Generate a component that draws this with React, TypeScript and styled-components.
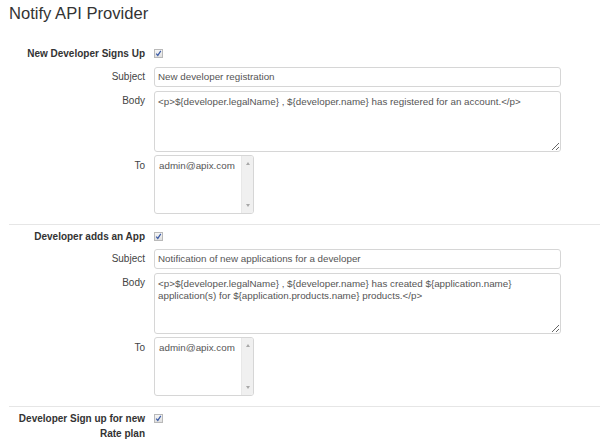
import React from "react";
import styled, { createGlobalStyle } from "styled-components";

const Global = createGlobalStyle`
  html, body { margin: 0; padding: 0; background: #fff; }
  body { font-family: "Liberation Sans", Arial, sans-serif; font-size: 10px; color: #333; }
  * { box-sizing: border-box; }
`;

const Page = styled.div`
  padding: 0 0 0 9px;
  width: 600px;
  overflow: hidden;
`;

const Title = styled.h1`
  margin: 0;
  padding: 4px 0 0 0;
  height: 42px;
  font-size: 16.6px;
  line-height: 20px;
  font-weight: normal;
  color: #333;
`;

const Section = styled.section<{ $last?: boolean }>`
  padding: 5px 0 ${(p) => (p.$last ? 0 : 10)}px 0;
  border-bottom: ${(p) => (p.$last ? "none" : "1px solid #e6e6e6")};
  display: flex;
  flex-direction: column;
`;

const Row = styled.div<{ $mt?: number }>`
  display: grid;
  grid-template-columns: 136px 407px;
  column-gap: 9px;
  align-items: start;
  margin-top: ${(p) => p.$mt ?? 0}px;
`;

const HeadLabel = styled.div`
  text-align: right;
  font-weight: bold;
  font-size: 10px;
  color: #333;
  line-height: 14.5px;
  min-height: 14px;
`;

const FieldLabel = styled.div<{ $pt?: number }>`
  text-align: right;
  color: #444;
  font-size: 10px;
  line-height: 12px;
  padding-top: ${(p) => p.$pt ?? 4}px;
`;

const CheckBox = styled.span`
  display: block;
  width: 9px;
  height: 9px;
  margin-top: 2px;
  border: 1px solid #b9b9b9;
  background: linear-gradient(#f6f6f6, #e0e0e0);
  position: relative;
  svg { position: absolute; left: 0; top: 0; }
`;

const TextInput = styled.div`
  height: 20px;
  border: 1px solid #d6d6d6;
  border-radius: 3px;
  padding: 3px 3px;
  color: #555;
  font-size: 9.8px;
  line-height: 12px;
  white-space: nowrap;
  overflow: hidden;
`;

const TextArea = styled.textarea`
  display: block;
  width: 407px;
  height: 61px;
  margin: 0;
  border: 1px solid #d6d6d6;
  border-radius: 3px;
  padding: 4px 3px;
  font-family: "Liberation Sans", Arial, sans-serif;
  font-size: 9.8px;
  line-height: 11.5px;
  color: #555;
  outline: none;
  overflow: hidden;
`;

const ListBox = styled.div`
  width: 100px;
  height: 59px;
  border: 1px solid #d6d6d6;
  border-radius: 3px;
  display: flex;
  overflow: hidden;
`;

const ListItems = styled.div`
  flex: 1 1 auto;
  min-width: 0;
  padding: 4px 4px;
  color: #555;
  font-size: 9.8px;
  line-height: 12px;
  white-space: nowrap;
`;

const ScrollBar = styled.div`
  flex: 0 0 12px;
  width: 12px;
  background: #f0f0f0;
  border-left: 1px solid #e8e8e8;
  display: flex;
  flex-direction: column;
  justify-content: space-between;
  align-items: center;
  padding: 6px 0 6px 0;
`;

const Arrow = styled.span<{ $down?: boolean }>`
  display: block;
  width: 0;
  height: 0;
  border-left: 2.5px solid transparent;
  border-right: 2.5px solid transparent;
  ${(p) =>
    p.$down
      ? "border-top: 3px solid #a8a8a8;"
      : "border-bottom: 3px solid #a8a8a8;"}
`;

const Check = () => (
  <CheckBox>
    <svg width="7" height="7" viewBox="0 0 7 7">
      <path d="M1.2 3.6 L2.8 5.4 L5.8 0.8" fill="none" stroke="#3b5ba6" strokeWidth="1.2" />
    </svg>
  </CheckBox>
);

type Notice = {
  title: string;
  subject: string;
  body: string;
  to: string;
};

const notices: Notice[] = [
  {
    title: "New Developer Signs Up",
    subject: "New developer registration",
    body: "<p>${developer.legalName} , ${developer.name} has registered for an account.</p>",
    to: "admin@apix.com",
  },
  {
    title: "Developer adds an App",
    subject: "Notification of new applications for a developer",
    body: "<p>${developer.legalName} , ${developer.name} has created ${application.name} application(s) for ${application.products.name} products.</p>",
    to: "admin@apix.com",
  },
];

export default function App() {
  return (
    <Page>
      <Global />
      <Title>Notify API Provider</Title>
      {notices.map((n, i) => (
        <Section key={i}>
          <Row>
            <HeadLabel>{n.title}</HeadLabel>
            <div>
              <Check />
            </div>
          </Row>
          <Row $mt={5}>
            <FieldLabel>Subject</FieldLabel>
            <TextInput>{n.subject}</TextInput>
          </Row>
          <Row $mt={4}>
            <FieldLabel>Body</FieldLabel>
            <TextArea defaultValue={n.body} readOnly />
          </Row>
          <Row $mt={3}>
            <FieldLabel $pt={5}>To</FieldLabel>
            <ListBox>
              <ListItems>{n.to}</ListItems>
              <ScrollBar>
                <Arrow />
                <Arrow $down />
              </ScrollBar>
            </ListBox>
          </Row>
        </Section>
      ))}
      <Section $last>
        <Row>
          <HeadLabel>
            Developer Sign up for new
            <br />
            Rate plan
          </HeadLabel>
          <div>
            <Check />
          </div>
        </Row>
      </Section>
    </Page>
  );
}
